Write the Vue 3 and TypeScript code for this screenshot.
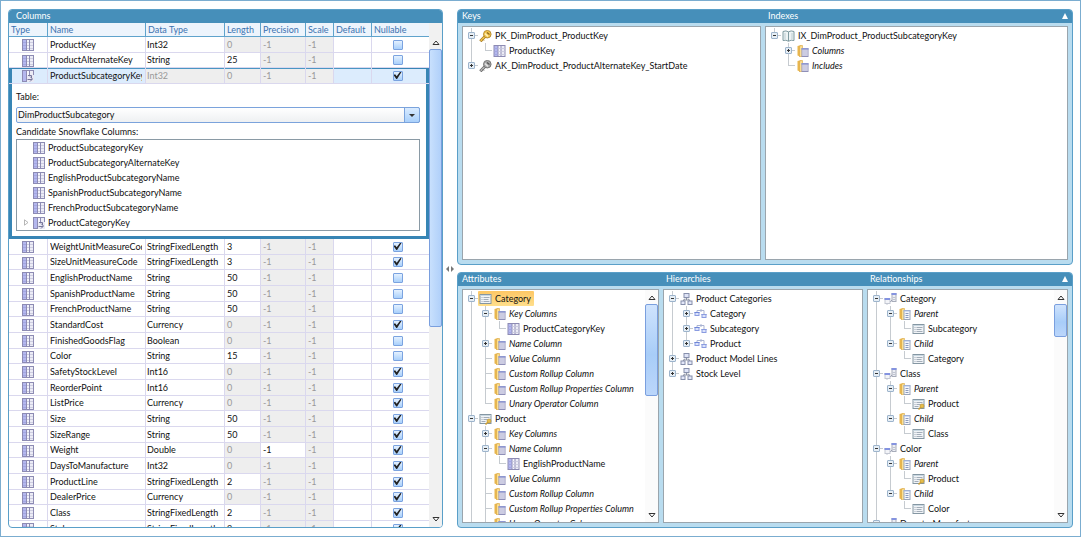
<script setup lang="ts">
import { computed, reactive, ref } from 'vue'

interface TreeNode {
  label: string
  icon: string
  italic?: boolean
  selected?: boolean
  open?: boolean
  children?: TreeNode[]
}

interface TreeRow {
  key: string
  node: TreeNode
  guides: string[]
}

interface Pane {
  title: string
  continues?: boolean
  thumb?: number
  nodes: TreeNode[]
}

interface ColumnRow {
  name: string
  type: string
  length: number
  editLength: boolean
  editPrecision: boolean
  nullable: boolean
  lookup: boolean
}

function column(name: string, type: string, length: number, nullable: boolean): ColumnRow {
  return {
    name,
    type,
    length,
    editLength: type.startsWith('String'),
    editPrecision: type === 'Double',
    nullable,
    lookup: name === 'ProductSubcategoryKey',
  }
}

const headers = ['Type', 'Name', 'Data Type', 'Length', 'Precision', 'Scale', 'Default', 'Nullable']

const topColumns = reactive<ColumnRow[]>([
  column('ProductKey', 'Int32', 0, false),
  column('ProductAlternateKey', 'String', 25, false),
  column('ProductSubcategoryKey', 'Int32', 0, true),
])

const restColumns = reactive<ColumnRow[]>([
  column('WeightUnitMeasureCode', 'StringFixedLength', 3, true),
  column('SizeUnitMeasureCode', 'StringFixedLength', 3, true),
  column('EnglishProductName', 'String', 50, false),
  column('SpanishProductName', 'String', 50, false),
  column('FrenchProductName', 'String', 50, false),
  column('StandardCost', 'Currency', 0, true),
  column('FinishedGoodsFlag', 'Boolean', 0, false),
  column('Color', 'String', 15, false),
  column('SafetyStockLevel', 'Int16', 0, true),
  column('ReorderPoint', 'Int16', 0, true),
  column('ListPrice', 'Currency', 0, true),
  column('Size', 'String', 50, true),
  column('SizeRange', 'String', 50, true),
  column('Weight', 'Double', 0, true),
  column('DaysToManufacture', 'Int32', 0, true),
  column('ProductLine', 'StringFixedLength', 2, true),
  column('DealerPrice', 'Currency', 0, true),
  column('Class', 'StringFixedLength', 2, true),
  column('Style', 'StringFixedLength', 2, true),
])

const groups = [
  { id: 'top', rows: topColumns, detail: true },
  { id: 'rest', rows: restColumns, detail: false },
]

const lookupTable = ref('DimProductSubcategory')
const candidates = [
  'ProductSubcategoryKey',
  'ProductSubcategoryAlternateKey',
  'EnglishProductSubcategoryName',
  'SpanishProductSubcategoryName',
  'FrenchProductSubcategoryName',
  'ProductCategoryKey',
]

const folder = (label: string, children?: TreeNode[], open = false): TreeNode => ({
  label,
  icon: 'folder',
  italic: true,
  children,
  open,
})

const columnLeaf = (label: string): TreeNode => ({ label, icon: 'column' })

const attributeTail = () => [
  folder('Value Column'),
  folder('Custom Rollup Column'),
  folder('Custom Rollup Properties Column'),
  folder('Unary Operator Column'),
]

const relationship = (label: string, parent: string): TreeNode => ({
  label,
  icon: 'relation',
  open: true,
  children: [
    {
      label: 'Parent',
      icon: 'folder-list',
      italic: true,
      open: true,
      children: [{ label: parent, icon: parent === 'Product' ? 'attribute-key' : 'attribute' }],
    },
    {
      label: 'Child',
      icon: 'folder-list',
      italic: true,
      open: true,
      children: [{ label, icon: 'attribute' }],
    },
  ],
})

const level = (label: string): TreeNode => ({
  label,
  icon: 'level',
  children: [columnLeaf(label)],
})

const sections = reactive<{ id: string; panes: Pane[] }[]>([
  {
    id: 'schema',
    panes: [
      {
        title: 'Keys',
        nodes: [
          {
            label: 'PK_DimProduct_ProductKey',
            icon: 'key-gold',
            open: true,
            children: [columnLeaf('ProductKey')],
          },
          {
            label: 'AK_DimProduct_ProductAlternateKey_StartDate',
            icon: 'key-gray',
            children: [columnLeaf('ProductAlternateKey')],
          },
        ],
      },
      {
        title: 'Indexes',
        nodes: [
          {
            label: 'IX_DimProduct_ProductSubcategoryKey',
            icon: 'book',
            open: true,
            children: [
              folder('Columns', [columnLeaf('ProductSubcategoryKey')]),
              folder('Includes'),
            ],
          },
        ],
      },
    ],
  },
  {
    id: 'dimension',
    panes: [
      {
        title: 'Attributes',
        continues: true,
        thumb: 45,
        nodes: [
          {
            label: 'Category',
            icon: 'attribute',
            selected: true,
            open: true,
            children: [
              folder('Key Columns', [columnLeaf('ProductCategoryKey')], true),
              folder('Name Column', [columnLeaf('EnglishProductCategoryName')]),
              ...attributeTail(),
            ],
          },
          {
            label: 'Product',
            icon: 'attribute-key',
            open: true,
            children: [
              folder('Key Columns', [columnLeaf('ProductKey')]),
              folder('Name Column', [columnLeaf('EnglishProductName')], true),
              ...attributeTail(),
            ],
          },
        ],
      },
      {
        title: 'Hierarchies',
        nodes: [
          {
            label: 'Product Categories',
            icon: 'hierarchy',
            open: true,
            children: [level('Category'), level('Subcategory'), level('Product')],
          },
          { label: 'Product Model Lines', icon: 'hierarchy', children: [level('Model Name')] },
          { label: 'Stock Level', icon: 'hierarchy', children: [level('Reorder Point')] },
        ],
      },
      {
        title: 'Relationships',
        continues: true,
        thumb: 16,
        nodes: [
          relationship('Category', 'Subcategory'),
          relationship('Class', 'Product'),
          relationship('Color', 'Product'),
          relationship('Days to Manufacture', 'Product'),
        ],
      },
    ],
  },
])

function flatten(
  nodes: TreeNode[],
  continues: boolean,
  prefix: string[],
  path: string,
): TreeRow[] {
  return nodes.flatMap((node, i) => {
    const last = i === nodes.length - 1 && !continues
    const key = `${path}/${i}`
    const rows: TreeRow[] = [{ key, node, guides: [...prefix, last ? 'end' : 'tee'] }]
    if (node.open && node.children) {
      rows.push(...flatten(node.children, false, [...prefix, last ? 'none' : 'line'], key))
    }
    return rows
  })
}

const rowsByPane = computed(() => {
  const result: Record<string, TreeRow[]> = {}
  for (const section of sections) {
    for (const pane of section.panes) {
      result[pane.title] = flatten(pane.nodes, !!pane.continues, [], pane.title)
    }
  }
  return result
})
</script>

<template>
  <svg class="sprite" aria-hidden="true">
    <symbol id="i-column" viewBox="0 0 12 12">
      <rect width="12" height="12" fill="#8d8bb3" />
      <rect x="1" y="1" width="3" height="10" fill="#b4b7ee" />
      <rect x="5" y="1" width="2" height="10" fill="#f4f4fc" />
      <rect x="8" y="1" width="3" height="10" fill="#ececf6" />
      <path d="M5 3.500H7M5 6.500H7M5 9.500H7M8 3.500H11M8 6.500H11M8 9.500H11" stroke="#cdcde0" />
      <path d="M1 3.500H4M1 6.500H4M1 9.500H4" stroke="#a3a6e0" />
    </symbol>
    <symbol id="i-lookup" viewBox="0 0 12 12">
      <rect width="12" height="12" fill="#8d8bb3" />
      <rect x="1" y="1" width="3" height="10" fill="#b4b7ee" />
      <rect x="5" y="1" width="2" height="10" fill="#f4f4fc" />
      <rect x="8" y="1" width="3" height="10" fill="#ececf6" />
      <rect x="5" y="5" width="7" height="7" fill="#e9e9f4" />
      <path d="M6 5.500H9.500V8M8 6.500L10.500 9L8 11.500M5.500 9.500H10" fill="none" stroke="#77779c" />
    </symbol>
    <symbol id="i-folder" viewBox="0 0 12 12">
      <path d="M1 1L5 0V12L1 10.500Z" fill="#e9b64c" />
      <path d="M3 1L6 .5V11.500L3 12Z" fill="#fbdf93" stroke="#d9a540" stroke-width=".6" />
      <rect x="5.500" y="3.500" width="6" height="8" fill="#f5f5fc" stroke="#8f8fb8" />
      <path d="M5 4H12" stroke="#8e9ad8" stroke-width="1.500" />
      <path d="M7.500 4V11M9.500 4V11" stroke="#a3a3c8" />
    </symbol>
    <symbol id="i-folder-list" viewBox="0 0 12 12">
      <path d="M1 1L5 0V12L1 10.500Z" fill="#e9b64c" />
      <path d="M3 1L6 .5V11.500L3 12Z" fill="#fbdf93" stroke="#d9a540" stroke-width=".6" />
      <rect x="5.500" y="2.500" width="6" height="9" fill="#f7f8fc" stroke="#9aa6bb" />
      <path d="M5 3H12" stroke="#a9bfee" />
      <path d="M7 5.500H10M7 7.500H10M7 9.500H10" stroke="#8b9cc0" />
    </symbol>
    <symbol id="i-attribute" viewBox="0 0 12 12">
      <rect x=".5" y="1.500" width="11" height="9" fill="#f1f4f7" stroke="#8597a3" />
      <path d="M1 2.500H11" stroke="#c9d8e2" />
      <path d="M2 4.500H3M4 4.500H10M2 6.500H3M4 6.500H9M2 8.500H3M4 8.500H10" stroke="#a3adb8" />
    </symbol>
    <symbol id="i-attribute-key" viewBox="0 0 12 12">
      <rect x=".5" y="1.500" width="11" height="9" fill="#f1f4f7" stroke="#8597a3" />
      <path d="M1 2.500H11" stroke="#c9d8e2" />
      <path d="M2 4.500H3M4 4.500H10M2 6.500H3M4 6.500H8M2 8.500H6" stroke="#a3adb8" />
      <circle cx="9.500" cy="8" r="2" fill="#e6bd4a" stroke="#b48a28" stroke-width=".6" />
      <path d="M8.500 9L6 11.500" stroke="#cfa033" stroke-width="1.500" />
    </symbol>
    <symbol id="i-key-gold" viewBox="0 0 12 12">
      <path d="M6 6L.8 11.200" stroke="#a87c22" stroke-width="3" />
      <path d="M6 6L1.200 10.800" stroke="#f0c552" stroke-width="1.600" />
      <path d="M3 9L4.500 10.500" stroke="#b58a2c" />
      <circle cx="7.800" cy="4.200" r="3.800" fill="#f2c64f" stroke="#a87c22" stroke-width=".8" />
      <path d="M5.500 3.500L8.500 6.500" stroke="#fdf0bd" stroke-width="1.400" />
      <path d="M7.500 2.500L10 4.500" stroke="#8b6720" stroke-width="1.200" />
    </symbol>
    <symbol id="i-key-gray" viewBox="0 0 12 12">
      <path d="M6 6L.8 11.200" stroke="#666" stroke-width="3" />
      <path d="M6 6L1.200 10.800" stroke="#b9b9b9" stroke-width="1.600" />
      <path d="M3 9L4.500 10.500" stroke="#777" />
      <circle cx="7.800" cy="4.200" r="3.800" fill="#a9a9a9" stroke="#666" stroke-width=".8" />
      <path d="M5.500 3.500L8.500 6.500" stroke="#e4e4e4" stroke-width="1.400" />
      <path d="M7.500 2.500L10 4.500" stroke="#555" stroke-width="1.200" />
    </symbol>
    <symbol id="i-book" viewBox="0 0 12 12">
      <path d="M.5 1.500Q3.500 .2 6 1.800Q8.500 .2 11.500 1.500V10.500Q8.500 9.500 6 11.300Q3.500 9.500 .5 10.500Z" fill="#eef4f5" stroke="#7f9aa0" />
      <path d="M6 2V11" stroke="#7f9aa0" />
      <path d="M2.500 3V9M9.500 3V9" stroke="#bccdd2" />
    </symbol>
    <symbol id="i-hierarchy" viewBox="0 0 12 12">
      <path d="M6 4V7M4.500 5.500L2.500 8M7.500 5.500L9.500 8M3 7H9" fill="none" stroke="#8c93a5" />
      <rect x="3.500" y=".5" width="5" height="4" fill="#dfe4f7" stroke="#8790ac" />
      <rect x=".5" y="8" width="4" height="3.500" fill="#e3e7f8" stroke="#8790ac" />
      <rect x="7.500" y="8" width="4" height="3.500" fill="#e3e7f8" stroke="#8790ac" />
    </symbol>
    <symbol id="i-level" viewBox="0 0 12 12">
      <path d="M6.500 1V4M2.500 4V2.500H9.500V6" fill="none" stroke="#a9b3d2" />
      <rect x=".5" y="4.500" width="4" height="3" fill="#dbe3fc" stroke="#8a9be0" />
      <path d="M0 4.500H5M7 6.500H12" stroke="#6f86d8" />
      <rect x="7.500" y="6.500" width="4" height="3" fill="#dbe3fc" stroke="#8a9be0" />
    </symbol>
    <symbol id="i-relation" viewBox="0 0 12 12">
      <path d="M2.500 8V11.500M5 9.500L7.500 7" fill="none" stroke="#8d95a8" />
      <rect x="7.500" y=".5" width="4" height="8" fill="#eceef4" stroke="#a7acb9" />
      <path d="M7 1H12" stroke="#8493e0" stroke-width="2" />
      <path d="M8 4.500H11M8 6.500H11" stroke="#c0c4d0" />
      <rect x=".5" y="5.500" width="5" height="5" fill="#f3f4f8" stroke="#c3c7d2" />
      <path d="M0 6H5.500" stroke="#8493e0" stroke-width="2" />
    </symbol>
  </svg>

  <main class="designer">
    <section class="panel columns-panel">
      <h2 class="panel-head"><span>Columns</span></h2>
      <div class="grid-area">
        <div class="grid-scroll">
          <table class="grid">
            <colgroup>
              <col class="c-type" />
              <col />
              <col class="c-data" />
              <col class="c-length" />
              <col class="c-precision" />
              <col class="c-scale" />
              <col class="c-default" />
              <col class="c-nullable" />
            </colgroup>
            <thead>
              <tr>
                <th v-for="h in headers" :key="h" scope="col">{{ h }}</th>
              </tr>
            </thead>
            <tbody v-for="group in groups" :key="group.id" :class="group.id">
              <tr v-for="row in group.rows" :key="row.name" :class="{ current: row.lookup }">
                <td class="type">
                  <svg class="icon"><use :href="row.lookup ? '#i-lookup' : '#i-column'" /></svg>
                </td>
                <td class="name"><span>{{ row.name }}</span></td>
                <td class="data" :class="{ off: row.lookup }">{{ row.type }}</td>
                <td :class="{ off: !row.editLength }">{{ row.length }}</td>
                <td :class="{ off: !row.editPrecision }">-1</td>
                <td class="off">-1</td>
                <td></td>
                <td class="nullable">
                  <input v-model="row.nullable" type="checkbox" :aria-label="`${row.name} nullable`" />
                </td>
              </tr>
              <tr v-if="group.detail" class="detail">
                <td colspan="8">
                  <div class="editor">
                    <label for="lookup-table">Table:</label>
                    <div class="combo">
                      <select id="lookup-table" v-model="lookupTable">
                        <option>DimProductSubcategory</option>
                      </select>
                      <span class="combo-arrow" aria-hidden="true"></span>
                    </div>
                    <p id="candidate-label">Candidate Snowflake Columns:</p>
                    <ul class="candidates" aria-labelledby="candidate-label">
                      <li v-for="(name, i) in candidates" :key="name">
                        <span class="twisty">
                          <svg v-if="i === candidates.length - 1" viewBox="0 0 5 7" width="5" height="7">
                            <path d="M.5 .8L4 3.500L.5 6.200Z" fill="#fff" stroke="#a5a5a5" stroke-width=".8" />
                          </svg>
                        </span>
                        <svg class="icon">
                          <use :href="i === candidates.length - 1 ? '#i-lookup' : '#i-column'" />
                        </svg>
                        {{ name }}
                      </li>
                    </ul>
                  </div>
                </td>
              </tr>
            </tbody>
          </table>
        </div>
        <div class="scrollbar wide">
          <button type="button" class="arrow up" aria-label="Scroll up">
            <svg viewBox="0 0 8 5" width="8" height="5"><path d="M1 4.500L4 1L7 4.500Z" fill="#fff" stroke="#333" /></svg>
          </button>
          <div class="track"><div class="thumb" :style="{ height: '60%' }"></div></div>
          <button type="button" class="arrow" aria-label="Scroll down">
            <svg viewBox="0 0 8 5" width="8" height="5"><path d="M1 .5L4 4L7 .5Z" fill="#fff" stroke="#333" /></svg>
          </button>
        </div>
      </div>
    </section>

    <div class="splitter" aria-hidden="true">
      <svg viewBox="0 0 10 6" width="10" height="6">
        <path d="M4 0V6L1 3Z" fill="#777" />
        <path d="M6 0V6L9 3Z" fill="#777" />
      </svg>
    </div>

    <div class="side">
      <section v-for="section in sections" :key="section.id" class="panel tree-panel" :class="section.id">
        <div class="panel-head">
          <h2 v-for="pane in section.panes" :key="pane.title">{{ pane.title }}</h2>
          <button type="button" class="collapse" aria-label="Collapse">
            <svg viewBox="0 0 6 6" width="6" height="6"><path d="M3 0L6 6H0Z" fill="#fff" /></svg>
          </button>
        </div>
        <div class="panes">
          <div v-for="pane in section.panes" :key="pane.title" class="pane">
            <ul class="tree" :aria-label="pane.title">
              <li v-for="row in rowsByPane[pane.title]" :key="row.key" class="node">
                <span v-for="(guide, g) in row.guides" :key="g" class="guide" :class="guide">
                  <button
                    v-if="g === row.guides.length - 1 && row.node.children"
                    type="button"
                    class="expander"
                    :class="{ plus: !row.node.open }"
                    :aria-label="`Toggle ${row.node.label}`"
                    @click="row.node.open = !row.node.open"
                  ></button>
                </span>
                <span class="caption" :class="{ italic: row.node.italic, selected: row.node.selected }">
                  <svg class="icon"><use :href="`#i-${row.node.icon}`" /></svg>
                  <span>{{ row.node.label }}</span>
                </span>
              </li>
            </ul>
            <div v-if="pane.thumb" class="scrollbar">
              <button type="button" class="arrow up" aria-label="Scroll up">
                <svg viewBox="0 0 8 5" width="8" height="5"><path d="M1 4.500L4 1L7 4.500Z" fill="#fff" stroke="#333" /></svg>
              </button>
              <div class="track"><div class="thumb" :style="{ height: pane.thumb + '%' }"></div></div>
              <button type="button" class="arrow" aria-label="Scroll down">
                <svg viewBox="0 0 8 5" width="8" height="5"><path d="M1 .5L4 4L7 .5Z" fill="#fff" stroke="#333" /></svg>
              </button>
            </div>
          </div>
        </div>
      </section>
    </div>
  </main>
</template>

<style>
body {
  margin: 0;
  background: #fff;
}
</style>

<style scoped>
* {
  box-sizing: border-box;
}

.sprite {
  position: absolute;
  width: 0;
  height: 0;
}

.designer {
  display: grid;
  grid-template-rows: minmax(0, 1fr);
  grid-template-columns: minmax(0, 435fr) 14px minmax(0, 616fr);
  height: 100vh;
  padding: 8px 7px;
  border: 1px solid #7badd0;
  color: #111;
  font: 9px/15px Lato, 'Open Sans', sans-serif;
}

button {
  padding: 0;
  border: 0;
  background: none;
}

h2,
p,
ul {
  margin: 0;
  padding: 0;
  font: inherit;
  list-style: none;
}

.panel {
  display: flex;
  flex-direction: column;
  min-height: 0;
  overflow: hidden;
  border: 1px solid #5a9fc8;
  border-radius: 4px;
}

.panel-head {
  flex: none;
  height: 13px;
  background: #468fba;
  color: #fff;
  line-height: 12px;
}

.columns-panel .panel-head {
  padding-left: 7px;
}

.grid-area {
  display: flex;
  flex: 1;
  min-height: 0;
}

.grid-scroll {
  flex: 1;
  min-width: 0;
  overflow: hidden;
}

.grid {
  width: 100%;
  table-layout: fixed;
  border-spacing: 0;
}

.c-type { width: 39px; }
.c-data { width: 79px; }
.c-length { width: 36px; }
.c-precision { width: 45px; }
.c-scale { width: 28px; }
.c-default { width: 38px; }
.c-nullable { width: 57px; }

th {
  height: 14px;
  padding: 0 0 0 2px;
  border-right: 1px solid #5fa3cc;
  border-bottom: 1px solid #5fa3cc;
  background: #edf4fc;
  color: #3b72b0;
  font-weight: 400;
  line-height: 13px;
  text-align: left;
}

td {
  height: 16px;
  padding: 0 0 0 2px;
  border-right: 1px solid #dad8ee;
  border-bottom: 1px solid #dad8ee;
  line-height: 14px;
  white-space: nowrap;
}

tr:nth-child(3n + 2) td {
  height: 15px;
}

th:last-child,
td:last-child {
  border-right: 0;
}

td.type {
  padding: 0;
  text-align: center;
}

.icon {
  width: 12px;
  height: 12px;
  flex: none;
  vertical-align: middle;
}

.name span {
  display: block;
  margin-right: 3px;
  overflow: hidden;
}

td.data {
  padding-left: 1px;
}

.off {
  background: #eee;
  color: #999;
}

.nullable {
  padding: 0 6px 0 0;
  text-align: center;
}

.current td:not(.off) {
  background: #dcecfd;
}

.current td {
  box-shadow: inset 0 1px #4a96c4;
}

.current td:first-child {
  box-shadow: inset 3px 1px #3785b5;
}

.current td:last-child {
  box-shadow: inset -3px 1px #3785b5;
}

input[type='checkbox'] {
  display: block;
  width: 10px;
  height: 10px;
  margin: 0 auto;
  border: 1px solid #7ba3e0;
  border-radius: 1px;
  background: linear-gradient(#e4f1ff, #a9d0fb);
  appearance: none;
}

input[type='checkbox']:checked::after {
  content: '';
  display: block;
  width: 8px;
  height: 8px;
  background: #222;
  clip-path: polygon(0 45%, 20% 35%, 40% 60%, 85% 0, 100% 5%, 45% 95%, 35% 95%);
}

.detail td {
  padding: 0;
  border: 3px solid #3785b5;
  border-top: 0;
}

.detail td:last-child {
  border-right: 3px solid #3785b5;
}

.editor {
  display: flex;
  flex-direction: column;
  padding: 5px 6px 5px 4px;
}

.editor label {
  margin-bottom: 2px;
  line-height: 16px;
}

.editor p {
  padding-top: 2px;
  line-height: 14px;
}

.combo {
  position: relative;
  display: flex;
}

.combo select {
  width: 100%;
  height: 16px;
  padding: 0 18px 0 1px;
  border: 1px solid #7ba3dc;
  border-radius: 2px;
  background: linear-gradient(#fff, #eef0f2);
  color: inherit;
  font: inherit;
  appearance: none;
}

.combo-arrow {
  position: absolute;
  top: 0;
  right: 0;
  display: grid;
  place-items: center;
  width: 16px;
  height: 16px;
  border: 1px solid #7ba3dc;
  border-radius: 0 2px 2px 0;
  background: linear-gradient(#d9ebff, #a9d0fb);
  pointer-events: none;
}

.combo-arrow::after {
  content: '';
  border: 3px solid transparent;
  border-top-color: #333;
  border-bottom: 0;
}

.candidates {
  padding-left: 7px;
  border: 1px solid #8a9aa5;
}

.candidates li {
  display: flex;
  gap: 3px;
  align-items: center;
  height: 15px;
}

.twisty {
  display: flex;
  width: 6px;
}

.scrollbar {
  display: flex;
  flex: none;
  flex-direction: column;
  width: 13px;
  background: #fbfbfb;
}

.scrollbar.wide {
  background: #f1f1f1;
}

.arrow {
  display: grid;
  place-items: center;
  height: 14px;
}

.wide .arrow {
  height: 15px;
}

.wide .arrow.up {
  height: 26px;
  padding-top: 12px;
}

.track {
  flex: 1;
}

.thumb {
  border: 1px solid #7a9fde;
  border-radius: 2px;
  background: linear-gradient(#cfe3fd, #a8cdf8 55%, #bbd6fb);
}

.wide .thumb {
  background: linear-gradient(90deg, #c8e0fd, #b0d0fa);
}

.splitter {
  display: grid;
  place-items: center;
}

.side {
  display: grid;
  grid-template-rows: minmax(0, 1fr) minmax(0, 1fr);
  gap: 7px;
  min-width: 0;
}

.tree-panel {
  background: #b9dcef;
}

.tree-panel .panel-head,
.panes {
  display: grid;
  gap: 4px;
  padding: 0 4px;
}

.schema .panel-head,
.schema .panes {
  grid-template-columns: minmax(0, 299fr) minmax(0, 303fr);
}

.dimension .panel-head,
.dimension .panes {
  grid-template-columns: minmax(0, 197fr) minmax(0, 200fr) minmax(0, 201fr);
}

.tree-panel .panel-head {
  position: relative;
}

.tree-panel h2:not(:first-child) {
  padding-left: 3px;
}

.collapse {
  position: absolute;
  top: 0;
  right: 4px;
  display: grid;
  place-items: center;
  width: 7px;
  height: 12px;
}

.panes {
  flex: 1;
  min-height: 0;
  padding-top: 3px;
  padding-bottom: 4px;
}

.pane {
  display: flex;
  min-height: 0;
  overflow: hidden;
  border: 1px solid #9aa5ad;
  background: #fff;
}

.tree {
  flex: 1;
  min-width: 0;
  padding: 1px 0 0 1px;
  overflow: hidden;
}

.node {
  display: flex;
  height: 15px;
  white-space: nowrap;
}

.guide {
  display: grid;
  flex: none;
  place-items: center;
  width: 14px;
  height: 15px;
}

.guide.tee {
  background:
    linear-gradient(#c6cbd0, #c6cbd0) 7px 0 / 1px 15px no-repeat,
    linear-gradient(#c6cbd0, #c6cbd0) 7px 7px / 7px 1px no-repeat;
}

.guide.end {
  background:
    linear-gradient(#c6cbd0, #c6cbd0) 7px 0 / 1px 8px no-repeat,
    linear-gradient(#c6cbd0, #c6cbd0) 7px 7px / 7px 1px no-repeat;
}

.guide.line {
  background: linear-gradient(#c6cbd0, #c6cbd0) 7px 0 / 1px 15px no-repeat;
}

.expander {
  width: 7px;
  height: 7px;
  margin-left: 1px;
  border: 1px solid #9db4cc;
  border-radius: 1px;
  background:
    linear-gradient(#333, #333) center / 3px 1px no-repeat,
    #e6eef5;
}

.expander.plus {
  background:
    linear-gradient(#333, #333) center / 3px 1px no-repeat,
    linear-gradient(#333, #333) center / 1px 3px no-repeat,
    #e6eef5;
}

.caption {
  display: flex;
  gap: 3px;
  align-items: center;
  padding: 0 3px 0 1px;
  line-height: 15px;
}

.caption .icon {
  width: 13px;
}

.caption.italic {
  font-style: italic;
  line-height: 13px;
}

.caption.selected {
  border-radius: 1px;
  background: linear-gradient(#fdc765, #ffdf8c);
}
</style>
